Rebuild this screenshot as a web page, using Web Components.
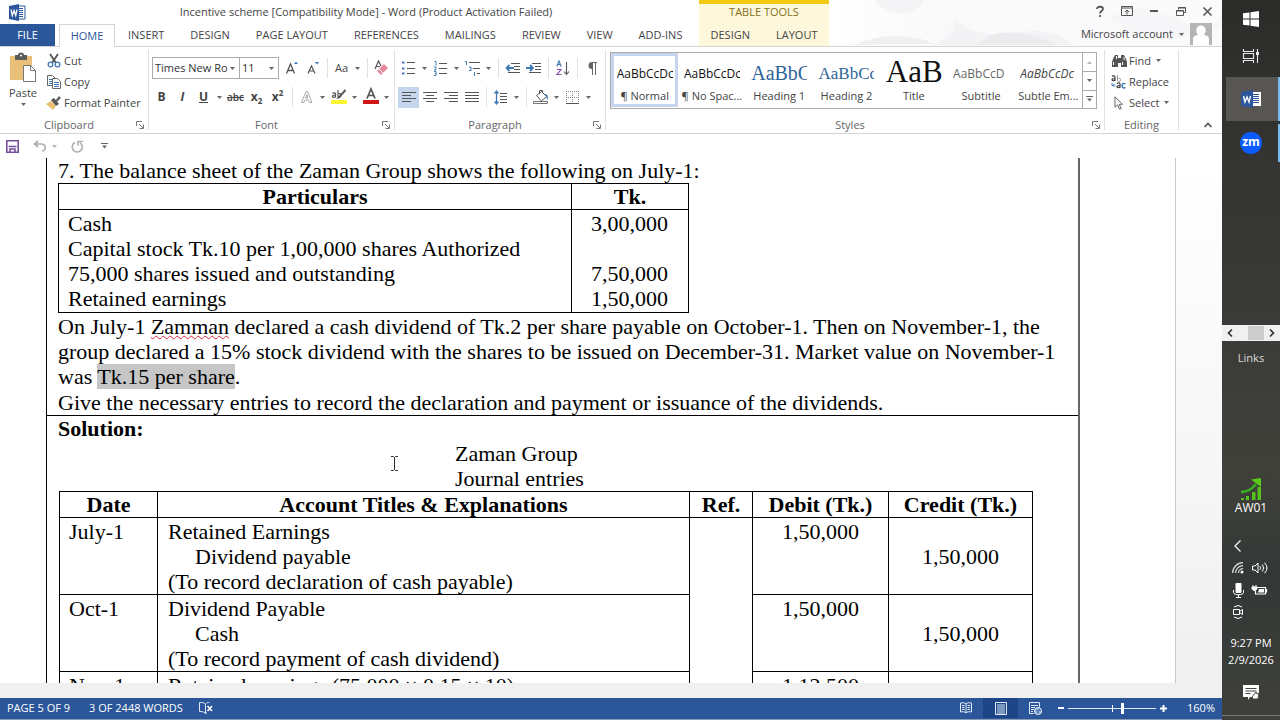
<!DOCTYPE html>
<html lang="en">
<head>
<meta charset="utf-8">
<title>Incentive scheme - Word</title>
<style>
html, body { margin: 0; height: 100%; overflow: hidden; }
body { font-family: "Open Sans", "Noto Sans", sans-serif; font-size: 11px; line-height: 16px; color: #444; background: #fff; }
</style>
</head>
<body>
<word-app></word-app>
<script>
const base = `<style>
*, *::before, *::after { box-sizing: border-box; }
button, select, input { font: inherit; color: inherit; margin: 0; padding: 0; border: 0; background: none; letter-spacing: inherit; }
button { display: flex; align-items: center; justify-content: center; white-space: nowrap; }
</style>`;

function define(name, render) {
  customElements.define(name, class extends HTMLElement {
    connectedCallback() {
      if (this.shadowRoot) return;
      const t = document.createElement('template');
      t.innerHTML = base + render(this);
      this.attachShadow({ mode: 'open' }).append(t.content.cloneNode(true));
    }
  });
}

const lines = (rows, color = '#555') => rows.map(([x1, y, x2]) => `<path d="M${x1} ${y}H${x2}" stroke="${color}"/>`).join('');
const wordLogo = `<path d="M9 2h7v13H9z" fill="#fff" stroke="#2b579a"/><path d="M10 4.5h4M10 6.5h4M10 8.5h4M10 10.5h4M10 12.5h4" stroke="#2b579a"/><path d="M0 2l10-2v17L0 15z" fill="#2b579a"/><path d="M2 5.500l1.300 6L5 6.500l1.700 5L8 5.500" fill="none" stroke="#fff" stroke-width="1.300"/>`;

const icons = {
  word: [16, 17, wordLogo],
  wordTask: [20, 18, `<path d="M11 2h9v14h-9z" fill="#fff"/><path d="M12 4.500h6M12 6.500h6M12 8.500h6M12 10.500h6M12 12.500h6" stroke="#2b579a"/><path d="M0 2l12-2v18L0 16z" fill="#2b579a"/><path d="M2.500 6l1.500 6 2-5 2 5 1.500-6" fill="none" stroke="#fff" stroke-width="1.400"/>`],
  arrow: [5, 3, `<path d="M0 0h5L2.500 3z" fill="#666"/>`],
  paste: [28, 30, `<path d="M1 3h22v24H1z" fill="#e8c078"/><path d="M6 2h3a3 2.500 0 0 1 6 0h3v5H6z" fill="#5c5c5c"/><circle cx="12" cy="2.500" r="1" fill="#fff"/><path d="M14.500 12.500h7l5 5v11h-12z" fill="#fff" stroke="#777"/><path d="M21.500 12.500v5h5" fill="none" stroke="#777"/>`],
  cut: [14, 14, `<path d="M3 0l6 9M11 0L5 9" stroke="#555" stroke-width="1.800"/><circle cx="3.500" cy="10.500" r="2.300" fill="none" stroke="#3f78b5" stroke-width="1.300"/><circle cx="10.500" cy="10.500" r="2.300" fill="none" stroke="#3f78b5" stroke-width="1.300"/>`],
  copy: [14, 14, `<path d="M.5.500h5l3 3v7h-8z" fill="#fff" stroke="#666"/><path d="M2 4.500h3M2 6.500h3M2 8.500h3" stroke="#3f78b5"/><path d="M5.500 3.500h5l3 3v7h-8z" fill="#fff" stroke="#666"/><path d="M7 7.500h5M7 9.500h5M7 11.500h5" stroke="#3f78b5"/>`],
  painter: [16, 14, `<path d="M0 8l5-3 5 5-3 4z" fill="#ebbf72"/><path d="M5 4l3-2 5 6-3 2z" fill="#555"/><path d="M9 5l4-5 2 2-4 4z" fill="#666"/>`],
  grow: [14, 14, `<path d="M1.500 12.500L5.500 3l4 9.500M3 9.500h5" fill="none" stroke="#555" stroke-width="1.300"/><path d="M9 3l2-2.500L13 3z" fill="#3f78b5"/>`],
  shrink: [14, 14, `<path d="M2 12.500L5.500 5 9 12.500M3.300 10h4.400" fill="none" stroke="#555" stroke-width="1.200"/><path d="M9 1h4l-2 2.500z" fill="#3f78b5"/>`],
  clear: [15, 15, `<path d="M1 8L4.500 0 7 5M2.500 5.500H6" fill="none" stroke="#555" stroke-width="1.200"/><path d="M3 10l7-7 4 4-7 7z" fill="#e58a9c"/><path d="M5 8l4 4" stroke="#fff"/>`],
  effects: [14, 14, `<path d="M1.500 12.500L6 1.500h1.500l4.500 11H9.500L8.500 10H5l-1 2.500zM5.500 8h2.500L6.800 4.500z" fill="#fff" stroke="#aaa"/>`],
  highlight: [16, 16, `<path d="M0 11h16v4H0z" fill="#fdf733"/><path d="M14 0L7 8l-2 2 3-.500L15 2z" fill="#555"/><path d="M1.500 4.500c1-1 3-1 3 .5v3.500M4.500 6c-2 0-3 .5-3 1.500s2 1.500 3 0M7 1v6.500c1 1 3 1 3-1S8.500 4 7 5" fill="none" stroke="#555" stroke-width="1.200"/>`],
  color: [16, 16, `<path d="M0 11h16v4H0z" fill="#d01616"/><path d="M4 9.500L8 0l4 9.500M5.500 6.500h5" fill="none" stroke="#555" stroke-width="1.700"/>`],
  bullets: [14, 14, lines([[5, 1.5, 13], [5, 7.5, 13], [5, 12.5, 13]]) + `<path d="M0 .500h2.500v2H0zM0 6.500h2.500v2H0zM0 11.500h2.500v2H0z" fill="#3f78b5"/>`],
  numbers: [14, 15, lines([[5, 2.5, 13], [5, 7.5, 13], [5, 12.5, 13]]) + `<path d="M.5.500H2v4M0 6h2v1.500L.5 9h2M0 10.500h2v4H0M1 12.500h1" fill="none" stroke="#3f78b5"/>`],
  multi: [16, 15, lines([[4, 1.5, 15], [8, 7.5, 15], [12, 12.500, 15]]) + `<path d="M0 .500h1.500V4M4 6h2v3.500H4M9.500 11v4" fill="none" stroke="#3f78b5"/>`],
  outdent: [16, 13, lines([[6, 1.5, 15], [9, 4.5, 15], [9, 7.5, 15], [3, 10.5, 15]]) + `<path d="M9 6H2M4.500 3L1.500 6l3 3" fill="none" stroke="#3f78b5" stroke-width="1.800"/>`],
  indent: [16, 13, lines([[6, 1.5, 15], [9, 4.5, 15], [9, 7.5, 15], [3, 10.5, 15]]) + `<path d="M0 6h6M4 3l3 3-3 3" fill="none" stroke="#3f78b5" stroke-width="1.800"/>`],
  sort: [14, 16, `<path d="M.8 6.500L3 1l2.200 5.500M1.500 4.500h3" fill="none" stroke="#3f78b5" stroke-width="1.100"/><path d="M1 9.500h4l-4 5h4.500" fill="none" stroke="#8a4fa3" stroke-width="1.200"/><path d="M10.500 2v12M8 11.500l2.500 3 2.500-3" fill="none" stroke="#555" stroke-width="1.100"/>`],
  pilcrow: [10, 13, `<path d="M5 0h5v1H9v12H8V1H6v12H5V7a3.500 3.500 0 0 1 0-7z" fill="#666"/>`],
  left: [14, 12, lines([[0, 1.5, 14], [0, 4.5, 9], [0, 7.5, 14], [0, 10.5, 9]])],
  center: [14, 12, lines([[0, 1.5, 14], [3, 4.5, 11], [0, 7.5, 14], [3, 10.5, 11]])],
  right: [14, 12, lines([[0, 1.5, 14], [5, 4.5, 14], [0, 7.5, 14], [5, 10.5, 14]])],
  justify: [14, 12, lines([[0, 1.5, 14], [0, 4.5, 14], [0, 7.5, 14], [0, 10.5, 14]])],
  spacing: [14, 15, lines([[6, 3.5, 13], [6, 6.500, 13], [6, 9.5, 13], [6, 12.5, 13]]) + `<path d="M2.500 1v13M.5 3.500L2.500 1l2 2.500M.5 11.500l2 2.500 2-2.500" fill="none" stroke="#3f78b5" stroke-width="1.300"/>`],
  shading: [16, 16, `<path d="M3.500 6.500l5-4 5 5-5 4.500z" fill="#fff" stroke="#555"/><path d="M6.500 5V1.500h3V4" fill="none" stroke="#555"/><path d="M12 5c3 0 3 3 3 6-1.500-1-1.500-3-3-6z" fill="#3f78b5"/><path d="M.5 12.500h14v2H.5z" fill="#fff" stroke="#777"/>`],
  borders: [13, 13, `<path d="M.5 0v12M6.500 0v12M12.500 0v12M0 .500h13M0 6.500h13" stroke="#888" stroke-dasharray="1 1"/><path d="M0 12.500h13" stroke="#555"/>`],
  find: [15, 13, `<path d="M1 5l2-4h3v12H0V8zM9 1h3l2 4 1 3v5H9zM6 4h3v5H6z" fill="#555"/><path d="M1.500 8v3M10.500 8v3M4.500 2v3M12 3v3" stroke="#fff"/>`],
  replace: [16, 14, `<path d="M1 1.500c1-.8 3-.8 3 .5v4M4 3.500c-2 0-3 .5-3 1.300s2 1.300 3 0" fill="none" stroke="#444" stroke-width="1.200"/><path d="M6.500 0v6c1 .8 3 .8 3-1.200s-2-2-3-1" fill="none" stroke="#999"/><path d="M6 8.500c1-.8 3-.8 3 .5v4M9 10.500c-2 0-3 .5-3 1.300s2 1.300 3 0" fill="none" stroke="#444" stroke-width="1.200"/><path d="M14.500 8.800c-3-1.300-3.500 1-3.500 2s1 3 3.500 1.700" fill="none" stroke="#2f72ba" stroke-width="1.400"/><path d="M1 8v2.500h2M2.500 9l1.500 1.500L2.500 12" fill="none" stroke="#3f78b5"/>`],
  select: [10, 14, `<path d="M1 .800v10.500l2.500-2.500 2 4.500 1.700-.800-2-4.200h3.300z" fill="#fff" stroke="#666"/>`],
  launcher: [8, 8, `<path d="M.5 5V.500H6M3 3l4 4M7.500 3.500v4h-4" fill="none" stroke="#777"/>`],
  up: [5, 3, `<path d="M0 3h5L2.500 0z" fill="#bbb"/>`],
  more: [7, 6, `<path d="M0 .500h7" stroke="#666"/><path d="M1 2.500h5L3.500 5.500z" fill="#666"/>`],
  collapse: [8, 6, `<path d="M.5 5L4 1.500 7.500 5" fill="none" stroke="#555" stroke-width="1.700"/>`],
  save: [13, 13, `<path d="M.800.800h11.400v11.400H.800z" fill="#fff" stroke="#77509c" stroke-width="1.600"/><path d="M2.500 6.500h8M4 12V9h5v3" fill="none" stroke="#77509c" stroke-width="1.600"/>`],
  undo: [14, 12, `<path d="M5 1L1.500 4 5 7M2 4h6c6 0 5 7 1 7" fill="none" stroke="#b0b0b0" stroke-width="1.700"/>`],
  redo: [13, 13, `<path d="M4 2.500a5 5 0 1 0 5 .3M7 5.500V1.500h5" fill="none" stroke="#b0b0b0" stroke-width="1.600"/>`],
  help: [8, 11, `<path d="M1 3c0-3 6-3 6 0 0 2-3 2-3 4.500M4 9v2" fill="none" stroke="#555" stroke-width="1.800"/>`],
  display: [12, 10, `<path d="M.5.500h11v9H.5zM.5 2h11M6 8.500v-4M4 6l2-2 2 2" fill="none" stroke="#555"/>`],
  min: [8, 2, `<path d="M0 1h8" stroke="#555" stroke-width="2"/>`],
  restore: [10, 9, `<path d="M2.500 2.500v-2h7v5h-2M.5 3.500h7v5h-7zM.5 4h7M2.500 1h7" fill="none" stroke="#555"/>`],
  close: [9, 9, `<path d="M.5.500l8 8M8.500.500l-8 8" stroke="#555" stroke-width="1.600"/>`],
  avatar: [22, 22, `<path d="M0 0h22v22H0z" fill="#b4b4b4"/><path d="M11 2.500a4.500 5 0 0 1 2.500 9.300c4 .7 5.500 2 5.500 4.200v6H3v-6c0-2.200 1.500-3.500 5.500-4.200A4.500 5 0 0 1 11 2.500z" fill="#fff"/>`],
  proof: [14, 12, `<path d="M6.500 2C5 .500 3 .500.5.500v9c2 0 4.500 0 6 2V2zm0 0c1-1.500 3-1.500 4-1.500M8 11l-1.500.5" fill="none" stroke="#dfe9f7"/><path d="M8.500 4l4.500 5M13 4L8.500 9" stroke="#fff" stroke-width="1.600"/>`],
  read: [12, 12, `<path d="M6 2C5 .500 2.500.500.5 1v9c2-.5 4.500-.5 5.500 1 1-1.500 3.500-1.500 5.500-1V1C9.500.500 7 .500 6 2zv9M2 3.500h2.500M2 5.500h2.500M2 7.500h2.500M7.500 3.500H10M7.500 5.500H10M7.500 7.500H10" fill="none" stroke="#dfe9f7"/>`],
  print: [12, 13, `<path d="M.5.500h11v12H.5zM2 3h8M2 5h8M2 7h8M2 9h8M2 11h8" fill="none" stroke="#dfe9f7"/>`],
  web: [13, 13, `<path d="M5 11.500H.500V.500h10v5M2 3.500h7M2 5.500h4M2 7.500h3M2 9.500h2" fill="none" stroke="#dfe9f7"/><circle cx="9" cy="9" r="3.500" fill="#9cb6da" stroke="#dfe9f7"/><path d="M7 8l2 1v3M10 6.500v2h2" stroke="#2b579a" fill="none"/>`],
  minus: [6, 2, `<path d="M0 1h6" stroke="#fff" stroke-width="2"/>`],
  plus: [7, 7, `<path d="M0 3.500h7M3.500 0v7" stroke="#fff" stroke-width="2"/>`],
  windows: [16, 16, `<path d="M0 2.300L6.500 1.400v6H0zM7.500 1.200L16 0v7.400H7.500zM0 8.500h6.500v6L0 13.700zM7.500 8.500H16V16l-8.500-1.200z" fill="#fff"/>`],
  taskview: [16, 14, `<path d="M.5 0v2.500h10V0M.5 14v-2.500h10V14M.5 4.500h10v5H.500zM14.500 0v14" fill="none" stroke="#e8e8e8" stroke-width="1.100"/><path d="M13 3h3v3h-3z" fill="#e8e8e8"/>`],
  chart: [22, 22, `<path d="M1 20h3v2H1zM6 18h3v4H6zM12 14h3.500v8H12zM17.500 9H21v13h-3.500z" fill="#55c318"/><path d="M1 14c7 0 12-4 15-8" fill="none" stroke="#3bab22" stroke-width="2.800"/><path d="M11 1.500L21 0v9z" fill="#5dc81c"/>`],
  back: [7, 12, `<path d="M6.500.500L1 6l5.500 5.500" fill="none" stroke="#fff" stroke-width="1.200"/>`],
  wifi: [12, 12, `<path d="M.6 11A10.500 10.500 0 0 1 11 .700M3.500 11A7.500 7.500 0 0 1 11 3.700M6.500 11A4.500 4.500 0 0 1 11 6.700" fill="none" stroke="#ddd" stroke-width="1.200"/><circle cx="10" cy="10" r="1.500" fill="#fff"/>`],
  sound: [16, 12, `<path d="M.5 4h2.500l3-3v10L3 8H.5zM8 4.300q1.500 1.700 0 3.400M10.300 2.500q3 3.500 0 7M12.500.700q5 5.300 0 10.600" fill="none" stroke="#fff"/>`],
  mic: [11, 15, `<rect x="2.500" width="6" height="10" rx="1" fill="#fff"/><path d="M.5 7v2.500c0 3 10 3 10 0V7M5.500 11.500V14M3 14.500h5" fill="none" stroke="#fff"/>`],
  battery: [16, 10, `<path d="M4.500 2.500h9v6.500h-10V6M14.500 4v3.500" fill="none" stroke="#fff" stroke-width="1.200"/><path d="M7 4h5v3.500H6z" fill="#fff"/><path d="M1 0v2M4 0v2M0 2h5v2L3.500 5.500H2L0 4z" fill="#fff" stroke="#fff"/>`],
  meet: [12, 14, `<path d="M1.500 4.500h6v5h-6zM7.500 6.500l3-2v5l-3-2M2 2q4-3 8 0M2 12q4 3 8 0" fill="none" stroke="#fff"/>`],
  notes: [16, 15, `<path d="M0 0h16v8l-3 4H7l-2 3v-3H0z" fill="#fff"/><path d="M2.500 3.500h11M2.500 6h11M2.500 8.500h5" stroke="#444" stroke-width="1.100"/><path d="M9 12l4-5 1 2 2-1-1 6h-5z" fill="#fff" stroke="#444"/>`],
  prev: [6, 8, `<path d="M5 .500L1.500 4 5 7.500" fill="none" stroke="#333" stroke-width="1.700"/>`],
  next: [6, 8, `<path d="M1 .500L4.500 4 1 7.500" fill="none" stroke="#333" stroke-width="1.700"/>`],
  ibeam: [7, 15, `<path d="M0 .500h2.500L3.500 1.500l1-1H7M3.500 1v13M0 14.500h2.500l1-1 1 1H7" fill="none" stroke="#333"/>`]
};

define('ui-icon', el => {
  const [w, h, body] = icons[el.getAttribute('name')];
  return `<style>:host { display: inline-flex; flex: none; } svg { display: block; overflow: visible; }</style>
  <svg width="${w}" height="${h}" viewBox="0 0 ${w} ${h}" aria-hidden="true">${body}</svg>`;
});

/* One ribbon command; "drop" adds the split arrow. */
define('tool-button', el => {
  const icon = el.getAttribute('icon'), label = el.getAttribute('label');
  return `<style>
  :host { display: inline-flex; flex: none; height: 21px; }
  button { width: 21px; height: 21px; }
  button.drop { width: 11px; }
  :host([on]) button { background: #c5d5ee; }
  </style>
  <button type="button" aria-label="${label}">${icon ? `<ui-icon name="${icon}"></ui-icon>` : '<slot></slot>'}</button>
  ${el.hasAttribute('drop') ? `<button type="button" class="drop" aria-label="${label} options"><ui-icon name="arrow"></ui-icon></button>` : ''}`;
});

/* Icon and caption command, as in Clipboard and Editing. */
define('text-command', el => `<style>
  :host { display: block; }
  button { height: 21px; gap: 2px; }
  .pic { width: 16px; display: flex; justify-content: center; }
  .drop { margin-left: 3px; }
  </style>
  <button type="button"><span class="pic"><ui-icon name="${el.getAttribute('icon')}"></ui-icon></span><slot></slot>${el.hasAttribute('drop') ? '<ui-icon class="drop" name="arrow"></ui-icon>' : ''}</button>`);

define('combo-box', el => `<style>
  :host { display: block; position: relative; border: 1px solid #ababab; height: 22px; flex: none; color: #333; }
  select { appearance: none; width: 100%; height: 20px; padding: 0 10px 0 2px; overflow: hidden; }
  ui-icon { position: absolute; right: 4px; top: 9px; pointer-events: none; }
  </style>
  <select aria-label="${el.getAttribute('label')}"><option>${el.getAttribute('value')}</option></select><ui-icon name="arrow"></ui-icon>`);

define('ribbon-group', el => `<style>
  :host { display: flex; flex-direction: column; flex: none; position: relative; border-right: 1px solid #e1e1e1; height: 80px; }
  .body { flex: 1; min-height: 0; }
  footer { display: flex; align-items: center; height: 10px; color: #666; padding: 0 3px; }
  footer span { flex: 1; text-align: center; }
  footer button { width: 10px; height: 10px; }
  </style>
  <div class="body"><slot></slot></div>
  <footer><span>${el.getAttribute('label')}</span>${el.hasAttribute('plain') ? '' : `<button type="button" aria-label="${el.getAttribute('label')} settings"><ui-icon name="launcher"></ui-icon></button>`}</footer>`);

define('style-card', el => `<style>
  :host { display: block; min-width: 0; }
  button { width: 100%; height: 54px; flex-direction: column; justify-content: flex-start; border: 3px solid transparent; overflow: hidden; }
  :host([on]) button { border-color: #c5d5ee; }
  .sample { height: 32px; width: 56px; overflow: hidden; display: flex; align-items: center; color: #111; font: 12px "Open Sans", sans-serif; padding-top: 3px; }
  .sample.h1 { font: 20px "Liberation Serif", serif; color: #2e6599; }
  .sample.h2 { font: 17px "Liberation Serif", serif; color: #2e6599; }
  .sample.title { font: 31px "Liberation Serif", serif; color: #111; padding: 0; }
  .sample.sub { color: #666; }
  .sample.em { color: #444; font-style: italic; }
  .name { height: 16px; }
  </style>
  <button type="button"><span class="sample ${el.getAttribute('kind') || ''}">${el.getAttribute('sample')}</span><span class="name"><slot></slot></span></button>`);

define('word-header', () => `<style>
  :host { display: flex; position: relative; height: 47px; border-bottom: 1px solid #d4d4d4; flex: none; }
  .art { position: absolute; right: 0; top: 0; width: 393px; height: 46px; }
  .main { width: 699px; flex: none; }
  .title { display: flex; height: 24px; align-items: center; }
  .title span { flex: 1; text-align: center; padding-left: 8px; }
  .title ui-icon { margin-left: 9px; }
  nav { display: flex; height: 23px; }
  nav button { padding: 0 13px; height: 22px; }
  nav .file { background: #2b579a; color: #fff; width: 55px; margin-right: 4px; }
  nav .home { background: #fff; color: #2b579a; width: 56px; height: 23px; border: 1px solid #d4d4d4; border-bottom: 0; padding: 0; }
  .context { width: 130px; flex: none; background: #fdf8dc; border-top: 4px solid #f2c811; color: #857019; }
  .context > div { height: 20px; line-height: 16px; text-align: center; }
  .context nav { color: #444; justify-content: center; }
  .right { flex: 1; position: relative; display: flex; flex-direction: column; align-items: flex-end; }
  .win { display: flex; height: 22px; margin-right: 1px; }
  .win button { width: 27px; height: 22px; }
  .account { display: flex; align-items: center; gap: 6px; padding-right: 10px; height: 24px; }
  </style>
  <svg class="art" viewBox="0 0 393 46" preserveAspectRatio="none" aria-hidden="true">
    <defs><linearGradient id="g"><stop offset="0" stop-color="#fff"/><stop offset=".3" stop-color="#f9f8fa"/><stop offset="1" stop-color="#fcfbfc"/></linearGradient></defs>
    <path d="M0 0h393v46H0z" fill="url(#g)"/>
    <path d="M25 45q22-10 45-9t35 8z" fill="#f0eff2"/><path d="M45 0h50q-8 15-25 13T45 0z" fill="#f4f3f5"/><path d="M125 18q22 22 60 15t60 12H100q28-8 25-27z" fill="#f3f2f5"/><path d="M160 36q30-10 68 9h-80z" fill="#ecebee"/><path d="M280 18q30-20 70 2t43-16v22q-60 30-113-8z" fill="#f6f5f8"/>
  </svg>
  <div class="main">
    <div class="title"><ui-icon name="word"></ui-icon><span>Incentive scheme [Compatibility Mode] - Word (Product Activation Failed)</span></div>
    <nav><button class="file">FILE</button><button class="home">HOME</button><button>INSERT</button><button>DESIGN</button><button>PAGE LAYOUT</button><button>REFERENCES</button><button>MAILINGS</button><button>REVIEW</button><button>VIEW</button><button>ADD-INS</button></nav>
  </div>
  <div class="context"><div>TABLE TOOLS</div><nav><button>DESIGN</button><button>LAYOUT</button></nav></div>
  <div class="right">
    <div class="win"><button aria-label="Help"><ui-icon name="help"></ui-icon></button><button aria-label="Ribbon display options"><ui-icon name="display"></ui-icon></button><button aria-label="Minimize"><ui-icon name="min"></ui-icon></button><button aria-label="Restore"><ui-icon name="restore"></ui-icon></button><button aria-label="Close"><ui-icon name="close"></ui-icon></button></div>
    <div class="account"><button>Microsoft account</button><ui-icon name="arrow"></ui-icon><ui-icon name="avatar"></ui-icon></div>
  </div>`);

define('word-ribbon', () => `<style>
  :host { display: flex; align-items: center; height: 87px; flex: none; border-bottom: 1px solid #d4d4d4; background: #fff; }
  .clip { width: 149px; } .font { width: 246px; } .para { width: 211px; } .edit { width: 74px; }
  .styles { flex: 1; min-width: 0; }
  .row { display: flex; align-items: center; height: 22px; }
  .row + .row { margin-top: 7px; }
  .font .row, .para .row { padding-left: 3px; }
  .font .row + .row { padding-left: 2px; }
  .stack { padding-top: 7px; }
  .sep { width: 8px; height: 20px; flex: none; display: flex; justify-content: center; }
  .sep::before { content: ""; width: 1px; background: #e1e1e1; }
  .clipbody { display: grid; grid-template-columns: 46px 1fr; }
  .paste { flex-direction: column; height: 62px; padding-top: 3px; gap: 2px; justify-content: flex-start; }
  .fname { width: 88px; } .fsize { width: 40px; margin: 0 2px 0 -1px; }
  .gallery { display: flex; margin: 2px 7px 0 4px; border: 1px solid #ababab; height: 57px; }
  .cards { flex: 1; display: grid; grid-template-columns: repeat(7, 1fr); min-width: 0; }
  .scroll { width: 14px; border-left: 1px solid #ababab; display: grid; grid-template-rows: repeat(3, 1fr); }
  .scroll button + button { border-top: 1px solid #ababab; }
  .edit text-command { padding-left: 6px; }
  .tail { width: 43px; align-self: flex-end; padding: 0 9px 4px; }
  .tail button { margin-left: auto; width: 10px; height: 8px; }
  b, i, u, s { font-size: 12px; } s { font-size: 10px; font-weight: 600; }
  sub, sup { font-size: 8px; line-height: 0; }
  </style>
  <ribbon-group class="clip" label="Clipboard"><div class="clipbody">
    <button class="paste"><ui-icon name="paste"></ui-icon><span>Paste</span><ui-icon name="arrow"></ui-icon></button>
    <div><text-command icon="cut">Cut</text-command><text-command icon="copy">Copy</text-command><text-command icon="painter">Format Painter</text-command></div>
  </div></ribbon-group>
  <ribbon-group class="font" label="Font"><div class="stack">
    <div class="row"><combo-box class="fname" label="Font" value="Times New Ro"></combo-box><combo-box class="fsize" label="Font size" value="11"></combo-box><tool-button icon="grow" label="Grow font"></tool-button><tool-button icon="shrink" label="Shrink font"></tool-button><span class="sep"></span><tool-button label="Change case" drop>Aa</tool-button><span class="sep"></span><tool-button icon="clear" label="Clear formatting"></tool-button></div>
    <div class="row"><tool-button label="Bold"><b>B</b></tool-button><tool-button label="Italic"><i><b>I</b></i></tool-button><tool-button label="Underline" drop><u><b>U</b></u></tool-button><tool-button label="Strikethrough"><s>abc</s></tool-button><tool-button label="Subscript"><b>x<sub>2</sub></b></tool-button><tool-button label="Superscript"><b>x<sup>2</sup></b></tool-button><span class="sep"></span><tool-button icon="effects" label="Text effects" drop></tool-button><tool-button icon="highlight" label="Highlight" drop></tool-button><tool-button icon="color" label="Font color" drop></tool-button></div>
  </div></ribbon-group>
  <ribbon-group class="para" label="Paragraph"><div class="stack">
    <div class="row"><tool-button icon="bullets" label="Bullets" drop></tool-button><tool-button icon="numbers" label="Numbering" drop></tool-button><tool-button icon="multi" label="Multilevel list" drop></tool-button><span class="sep"></span><tool-button icon="outdent" label="Decrease indent"></tool-button><tool-button icon="indent" label="Increase indent"></tool-button><span class="sep"></span><tool-button icon="sort" label="Sort"></tool-button><span class="sep"></span><tool-button icon="pilcrow" label="Show marks"></tool-button></div>
    <div class="row"><tool-button icon="left" label="Align left" on></tool-button><tool-button icon="center" label="Center"></tool-button><tool-button icon="right" label="Align right"></tool-button><tool-button icon="justify" label="Justify"></tool-button><span class="sep"></span><tool-button icon="spacing" label="Line spacing" drop></tool-button><span class="sep"></span><tool-button icon="shading" label="Shading" drop></tool-button><tool-button icon="borders" label="Borders" drop></tool-button></div>
  </div></ribbon-group>
  <ribbon-group class="styles" label="Styles"><div class="gallery">
    <div class="cards"><style-card on sample="AaBbCcDc">¶ Normal</style-card><style-card sample="AaBbCcDc">¶ No Spac...</style-card><style-card kind="h1" sample="AaBbC">Heading 1</style-card><style-card kind="h2" sample="AaBbCcl">Heading 2</style-card><style-card kind="title" sample="AaB">Title</style-card><style-card kind="sub" sample="AaBbCcD">Subtitle</style-card><style-card kind="em" sample="AaBbCcDc">Subtle Em...</style-card></div>
    <div class="scroll"><button aria-label="Previous row"><ui-icon name="up"></ui-icon></button><button aria-label="Next row"><ui-icon name="arrow"></ui-icon></button><button aria-label="More styles"><ui-icon name="more"></ui-icon></button></div>
  </div></ribbon-group>
  <ribbon-group class="edit" label="Editing" plain><text-command icon="find" drop>Find</text-command><text-command icon="replace">Replace</text-command><text-command icon="select" drop>Select</text-command></ribbon-group>
  <div class="tail"><button aria-label="Collapse ribbon"><ui-icon name="collapse"></ui-icon></button></div>`);

define('quick-access', () => `<style>
  :host { display: flex; align-items: center; height: 24px; flex: none; padding-left: 6px; gap: 14px; background: #fff; }
  div { display: flex; align-items: center; gap: 5px; }
  div ui-icon + ui-icon { opacity: .5; }
  .custom { margin-left: 3px; }
  </style>
  <button aria-label="Save"><ui-icon name="save"></ui-icon></button><div><ui-icon name="undo"></ui-icon><ui-icon name="arrow"></ui-icon></div><button aria-label="Redo"><ui-icon name="redo"></ui-icon></button><button class="custom" aria-label="Customize"><ui-icon name="more"></ui-icon></button>`);

define('word-document', () => `<style>
  :host { display: block; flex: 1; min-height: 0; overflow: hidden; position: relative; background: linear-gradient(#fff, #f0f0f0); }
  .page { background: #fff; margin-right: 46px; border-right: 1px solid #c6c6c6; min-height: 100%; padding: 0 95px 0 46px; font: 22px/25px "Liberation Serif", serif; color: #000; }
  .frame { border: solid #000; border-width: 0 2px 0 1px; border-right-color: #666; }
  section { padding-left: 11px; }
  section + section { border-top: 1px solid #000; }
  p { margin: 0; white-space: nowrap; }
  .story { padding-top: 1px; } .story p + p { margin-top: 1px; }
  .err { text-decoration: underline wavy #d8282f 1px; text-underline-offset: 1px; text-decoration-skip-ink: none; }
  mark { background: #c6c6c6; color: inherit; }
  table { border-collapse: collapse; table-layout: fixed; }
  th, td { border: 1px solid #000; padding: 1px 10px 0 9px; vertical-align: top; white-space: nowrap; }
  th { padding: 0; }
  .t1 { width: 631px; }
  .t1 td { padding-bottom: 1px; }
  .t2 { width: 974px; margin-left: 1px; }
  .t2 td + td { padding-left: 10px; }
  .num { text-align: center; }
  .in { padding-left: 27px; }
  .head { padding-left: 397px; }
  .cursor { position: absolute; left: 391px; top: 298px; }
  </style>
  <div class="page"><div class="frame">
    <section>
      <p>7. The balance sheet of the Zaman Group shows the following on July-1:</p>
      <table class="t1"><colgroup><col style="width:513px"><col></colgroup>
        <thead><tr><th>Particulars</th><th>Tk.</th></tr></thead>
        <tbody><tr><td><p>Cash</p><p>Capital stock Tk.10 per 1,00,000 shares Authorized</p><p>75,000 shares issued and outstanding</p><p>Retained earnings</p></td><td class="num"><p>3,00,000</p><p>&nbsp;</p><p>7,50,000</p><p>1,50,000</p></td></tr></tbody></table>
      <div class="story"><p>On July-1 <span class="err">Zamman</span> declared a cash dividend of Tk.2 per share payable on October-1. Then on November-1, the<br>group declared a 15% stock dividend with the shares to be issued on December-31. Market value on November-1<br>was <mark>Tk.15 per share</mark>.</p><p>Give the necessary entries to record the declaration and payment or issuance of the dividends.</p></div>
    </section>
    <section>
      <p><b>Solution:</b></p>
      <div class="head"><p>Zaman Group</p><p>Journal entries</p></div>
      <table class="t2"><colgroup><col style="width:98px"><col style="width:532px"><col style="width:63px"><col style="width:136px"><col></colgroup>
        <thead><tr><th>Date</th><th>Account Titles &amp; Explanations</th><th>Ref.</th><th>Debit (Tk.)</th><th>Credit (Tk.)</th></tr></thead>
        <tbody>
        <tr><td>July-1</td><td><p>Retained Earnings</p><p class="in">Dividend payable</p><p>(To record declaration of cash payable)</p></td><td rowspan="3"></td><td class="num">1,50,000</td><td class="num"><p>&nbsp;</p><p>1,50,000</p></td></tr>
        <tr><td>Oct-1</td><td><p>Dividend Payable</p><p class="in">Cash</p><p>(To record payment of cash dividend)</p></td><td class="num">1,50,000</td><td class="num"><p>&nbsp;</p><p>1,50,000</p></td></tr>
        <tr><td>Nov-1</td><td>Retained earnings (75,000 × 0.15 × 10)</td><td class="num">1,12,500</td><td></td></tr>
        </tbody></table>
    </section>
  </div></div>
  <ui-icon class="cursor" name="ibeam"></ui-icon>`);

define('status-bar', () => `<style>
  :host { display: flex; align-items: center; height: 22px; margin-top: 15px; flex: none; background: #2b579a; border-bottom: 1px solid #8a9cb8; color: #fff; padding: 0 7px 1px; }
  .words { margin: 0 16px 0 19px; }
  .fill { flex: 1; }
  .view { width: 35px; height: 20px; }
  .view.on { background: #1e4686; }
  .zoom { margin-left: 4px; display: flex; align-items: center; gap: 3px; }
  .zoom button { width: 8px; height: 16px; }
  input { appearance: none; width: 88px; height: 15px; background: linear-gradient(#fff, #fff) 44px 50% / 1px 7px no-repeat, linear-gradient(#dfe9f7, #dfe9f7) 0 50% / 100% 1px no-repeat; }
  input::-webkit-slider-thumb { appearance: none; width: 3px; height: 11px; background: #fff; }
  .pct { width: 48px; text-align: right; }
  </style>
  <span>PAGE 5 OF 9</span><span class="words">3 OF 2448 WORDS</span><ui-icon name="proof"></ui-icon><span class="fill"></span>
  <button class="view" aria-label="Read mode"><ui-icon name="read"></ui-icon></button><button class="view on" aria-label="Print layout"><ui-icon name="print"></ui-icon></button><button class="view" aria-label="Web layout"><ui-icon name="web"></ui-icon></button>
  <div class="zoom"><button aria-label="Zoom out"><ui-icon name="minus"></ui-icon></button><input type="range" min="0" max="100" value="62" aria-label="Zoom"><button aria-label="Zoom in"><ui-icon name="plus"></ui-icon></button></div><span class="pct">160%</span>`);

define('task-bar', () => `<style>
  :host { display: flex; flex-direction: column; width: 58px; flex: none; background: linear-gradient(#2b2b2a, #343433 22%, #3a3a38 45%, #41413b 65%, #333836 80%, #3f403a); color: #fff; }
  button { width: 100%; height: 36px; flex: none; }
  .start { height: 38px; }
  .app { height: 44px; border-right: 2px solid #76b9ed; }
  .word { margin-top: 3px; margin-left: 4px; width: 54px; background: #575653; padding-right: 2px; }
  .zm { height: 38px; margin-top: 3px; padding-left: 2px; }
  .zm span { width: 22px; height: 22px; border-radius: 11px; background: #0b5cff; font: bold 12px/20px "Open Sans", sans-serif; }
  .fill { flex: 1; }
  .strip { display: flex; height: 16px; background: #f0f0f0; align-items: center; justify-content: space-between; padding: 0 4px; margin-bottom: 9px; }
  .strip button { width: 8px; height: 16px; }
  .strip i { width: 16px; height: 14px; background: #cdcdcd; margin-left: 10px; }
  .links { text-align: center; color: #ddd; }
  .links + .fill { flex: none; height: 112px; }
  .aw { height: auto; flex-direction: column; font-size: 12px; line-height: 15px; }
  .tray { display: grid; grid-template-columns: 22px 22px; grid-auto-rows: 22px; justify-items: center; align-items: center; padding: 20px 0 0 5px; }
  .tray .full { grid-column: 1 / 3; justify-self: start; margin-left: 7px; }
  .clock { text-align: center; line-height: 17px; padding-top: 11px; }
  .note { height: 30px; margin: 9px 0 8px; }
  hr { width: 100%; margin: 0 0 4px; border: 0; height: 1px; background: #777; }
  </style>
  <button class="start" aria-label="Start"><ui-icon name="windows"></ui-icon></button>
  <button aria-label="Task view"><ui-icon name="taskview"></ui-icon></button>
  <button class="app word" aria-label="Word"><ui-icon name="wordTask"></ui-icon></button>
  <button class="app zm"><span>zm</span></button>
  <span class="fill"></span>
  <div class="strip"><button aria-label="Scroll left"><ui-icon name="prev"></ui-icon></button><i></i><button aria-label="Scroll right"><ui-icon name="next"></ui-icon></button></div>
  <div class="links">Links</div><span class="fill"></span>
  <button class="aw"><ui-icon name="chart"></ui-icon><span>AW01</span></button>
  <div class="tray"><ui-icon class="full" name="back"></ui-icon><ui-icon name="wifi"></ui-icon><ui-icon name="sound"></ui-icon><ui-icon name="mic"></ui-icon><ui-icon name="battery"></ui-icon><ui-icon name="meet"></ui-icon></div>
  <div class="clock">9:27 PM<br>2/9/2026</div>
  <button class="note" aria-label="Notifications"><ui-icon name="notes"></ui-icon></button><hr>`);

define('word-app', () => `<style>
  :host { display: flex; height: 100vh; }
  main { flex: 1; min-width: 0; display: flex; flex-direction: column; background: #f0f0f0; }
  word-header { background: #fff; }
  </style>
  <main><word-header></word-header><word-ribbon></word-ribbon><quick-access></quick-access><word-document></word-document><status-bar></status-bar></main>
  <task-bar></task-bar>`);
</script>
</body>
</html>
